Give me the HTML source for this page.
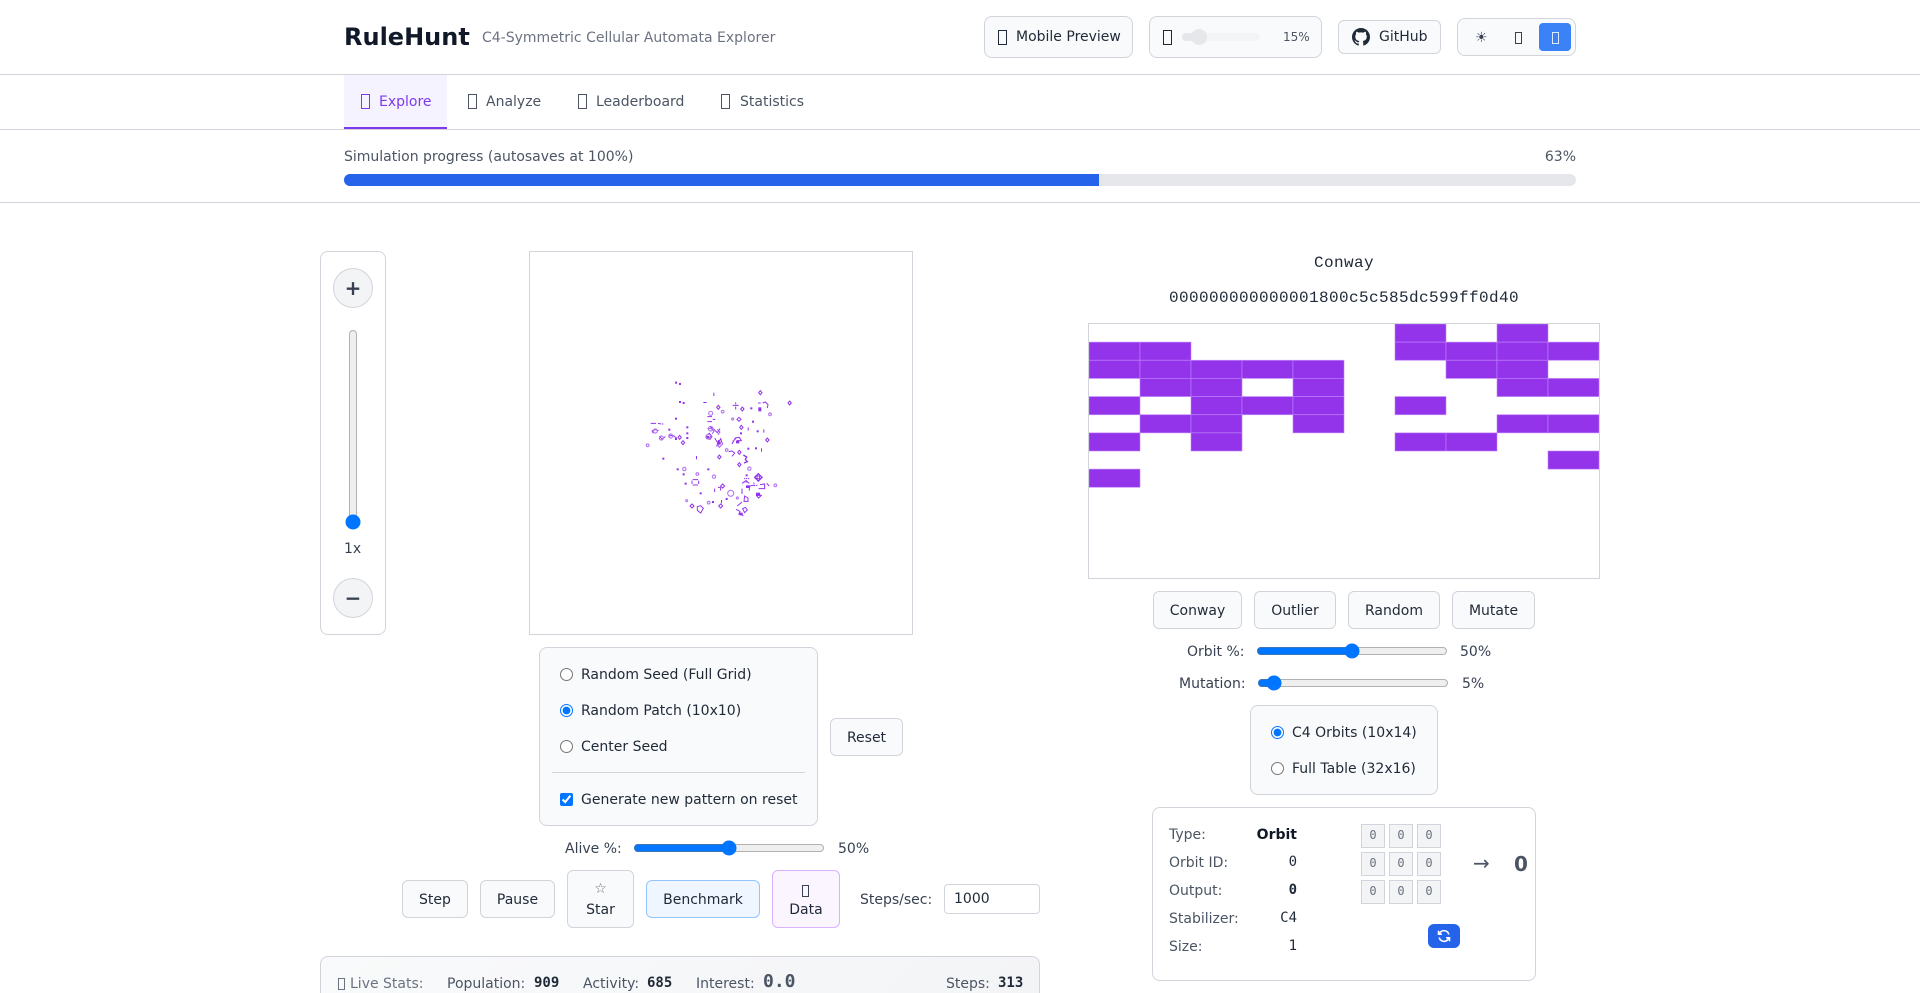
<!DOCTYPE html>
<html lang="en">
<head>
<meta charset="utf-8">
<title>RuleHunt</title>
<style>
html,body{margin:0;padding:0;width:1920px;height:993px;overflow:hidden;background:#fff;}
body{position:relative;font-family:"DejaVu Sans","Liberation Sans",sans-serif;font-size:14px;color:#1f2937;}
.a{position:absolute;box-sizing:border-box;}
.t{position:absolute;white-space:nowrap;line-height:20px;height:20px;margin-top:1px;}
.m{font-family:"DejaVu Sans Mono","Liberation Mono",monospace;}
.line{position:absolute;left:0;width:1920px;height:1px;background:#d1d5db;}
.b{position:absolute;box-sizing:border-box;background:#f9fafb;border:1px solid #d1d5db;border-radius:6px;display:flex;align-items:center;justify-content:center;color:#1f2937;white-space:nowrap;padding-top:2px;}
.tab{color:#4b5563;}
.x{position:absolute;box-sizing:border-box;width:9px;height:15px;border:1px solid #374151;}
.s{width:7px;height:12px;}
input{margin:0;position:absolute;}
input[type=range]{height:16px;accent-color:#0075ff;}
.c{position:absolute;box-sizing:border-box;width:24px;height:24px;background:#f3f4f6;border:1px solid #d1d5db;color:#6b7280;font:12px/20px "DejaVu Sans Mono",monospace;text-align:center;}
.g{color:#4b5563;}
</style>
</head>
<body>
<!-- Header -->
<div class="t" style="margin-top:0;left:344px;top:21px;font-size:24px;font-weight:700;line-height:32px;height:32px;color:#111827;">RuleHunt</div>
<div class="t" style="left:482px;top:27px;color:#6b7280;">C4-Symmetric Cellular Automata Explorer</div>

<div class="b" style="left:984px;top:16px;width:149px;height:42px;border-radius:8px;"></div>
<div class="x" style="left:998px;top:30px;border-color:#1f2937;"></div>
<div class="t" style="left:1016px;top:26px;">Mobile Preview</div>
<div class="b" style="left:1149px;top:16px;width:173px;height:42px;border-radius:8px;"></div>
<div class="x" style="left:1163px;top:30px;border-color:#1f2937;"></div>
<div class="a" style="left:1182px;top:33px;width:78px;height:8px;background:#f3f4f6;border-radius:4px;"></div>
<div class="a" style="left:1182px;top:33px;width:17px;height:8px;background:#e5e7eb;border-radius:4px 0 0 4px;"></div>
<div class="a" style="left:1191px;top:29px;width:16px;height:16px;background:#e5e7eb;border-radius:50%;"></div>
<div class="t g" style="margin-top:0;left:1283px;top:27px;font-size:12px;">15%</div>

<div class="b" style="left:1338px;top:20px;width:103px;height:34px;"></div>
<svg class="a" style="left:1352px;top:28px;" width="18" height="18" viewBox="0 0 16 16" fill="#1f2937"><path d="M8 0C3.58 0 0 3.58 0 8c0 3.54 2.29 6.53 5.47 7.59.4.07.55-.17.55-.38 0-.19-.01-.82-.01-1.49-2.01.37-2.53-.49-2.69-.94-.09-.23-.48-.94-.82-1.13-.28-.15-.68-.52-.01-.53.63-.01 1.08.58 1.23.82.72 1.21 1.87.87 2.33.66.07-.52.28-.87.51-1.07-1.78-.2-3.64-.89-3.64-3.95 0-.87.31-1.59.82-2.15-.08-.2-.36-1.02.08-2.12 0 0 .67-.21 2.2.82.64-.18 1.32-.27 2-.27s1.36.09 2 .27c1.53-1.04 2.2-.82 2.2-.82.44 1.1.16 1.92.08 2.12.51.56.82 1.27.82 2.15 0 3.07-1.87 3.75-3.65 3.95.29.25.54.73.54 1.48 0 1.07-.01 1.93-.01 2.2 0 .21.15.46.55.38A8.01 8.01 0 0 0 16 8c0-4.42-3.58-8-8-8z"/></svg>
<div class="t" style="left:1379px;top:26px;">GitHub</div>

<div class="b" style="left:1457px;top:18px;width:119px;height:38px;border-radius:8px;"></div>
<div class="a" style="left:1539px;top:23px;width:32px;height:28px;background:#3b82f6;border-radius:4px;"></div>
<div class="t" style="left:1475px;top:27px;color:#374151;">☀</div>
<div class="x s" style="left:1515px;top:32px;"></div>
<div class="x s" style="left:1552px;top:32px;border-color:#dbeafe;"></div>

<div class="line" style="top:74px;"></div>

<!-- Tabs -->
<div class="a" style="left:344px;top:75px;width:103px;height:54px;background:#f5f3ff;border-bottom:2px solid #7c3aed;"></div>
<div class="x" style="left:361px;top:94px;border-color:#7c3aed;"></div>
<div class="t" style="left:379px;top:91px;color:#7c3aed;">Explore</div>
<div class="x" style="left:468px;top:94px;border-color:#4b5563;"></div>
<div class="t tab" style="left:486px;top:91px;">Analyze</div>
<div class="x" style="left:578px;top:94px;border-color:#4b5563;"></div>
<div class="t tab" style="left:596px;top:91px;">Leaderboard</div>
<div class="x" style="left:721px;top:94px;border-color:#4b5563;"></div>
<div class="t tab" style="left:740px;top:91px;">Statistics</div>
<div class="line" style="top:129px;"></div>

<!-- Progress -->
<div class="t" style="left:344px;top:146px;color:#4b5563;">Simulation progress (autosaves at 100%)</div>
<div class="t" style="right:344px;top:146px;color:#4b5563;">63%</div>
<div class="a" style="left:344px;top:174px;width:1232px;height:12px;background:#e5e7eb;border-radius:6px;overflow:hidden;"><div style="width:755px;height:12px;background:#2563eb;"></div></div>
<div class="line" style="top:202px;"></div>

<!-- Zoom panel -->
<div class="a" style="left:320px;top:251px;width:66px;height:384px;background:#fff;border:1px solid #d1d5db;border-radius:8px;"></div>
<div class="b" style="left:333px;top:268px;width:40px;height:40px;border-radius:50%;background:#f3f4f6;font-size:20px;font-weight:700;color:#374151;padding-top:0;">+</div>
<input type="range" min="1" max="100" value="1" style="left:345px;top:329px;width:16px;height:201px;writing-mode:vertical-lr;direction:rtl;">
<div class="t" style="left:344px;top:538px;color:#374151;">1x</div>
<div class="b" style="left:333px;top:578px;width:40px;height:40px;border-radius:50%;background:#f3f4f6;font-size:20px;font-weight:700;color:#374151;padding-top:0;">−</div>

<!-- Sim canvas -->
<div class="a" style="left:529px;top:251px;width:384px;height:384px;background:#fff;border:1px solid #d1d5db;"></div>
<svg class="a" style="left:630px;top:370px;" width="170" height="160" viewBox="0 0 510 480">
<g fill="#9333ea">
<rect x="135" y="35" width="6" height="6"/><rect x="147" y="39" width="6" height="6"/><rect x="147" y="93" width="6" height="6"/><rect x="158" y="96" width="6" height="6"/><rect x="135" y="143" width="6" height="6"/><rect x="115" y="176" width="6" height="6"/><rect x="169" y="169" width="6" height="6"/><rect x="169" y="187" width="6" height="6"/><rect x="169" y="201" width="6" height="6"/><rect x="135" y="204" width="6" height="6"/><rect x="140" y="295" width="6" height="6"/><rect x="158" y="310" width="6" height="6"/><rect x="164" y="338" width="6" height="6"/><rect x="209" y="367" width="6" height="6"/><rect x="232" y="295" width="6" height="6"/><rect x="97" y="263" width="6" height="6"/><rect x="246" y="393" width="6" height="6"/><rect x="287" y="384" width="6" height="6"/><rect x="352" y="233" width="6" height="6"/><rect x="375" y="232" width="6" height="6"/><rect x="380" y="181" width="6" height="6"/><rect x="366" y="152" width="6" height="6"/><rect x="361" y="112" width="6" height="6"/><rect x="330" y="187" width="6" height="6"/><rect x="347" y="313" width="6" height="6"/>
<rect x="220" y="96" width="10" height="3"/><rect x="250" y="68" width="3" height="10"/><rect x="400" y="178" width="3" height="10"/><rect x="353" y="172" width="3" height="10"/><rect x="198" y="258" width="3" height="10"/><rect x="393" y="235" width="3" height="10"/><rect x="273" y="390" width="3" height="10"/>
<rect x="385" y="112" width="9" height="12"/><rect x="262" y="214" width="10" height="10"/><rect x="318" y="212" width="10" height="8"/><rect x="348" y="346" width="12" height="8"/><rect x="378" y="368" width="12" height="10"/><rect x="328" y="428" width="10" height="8"/><rect x="228" y="198" width="10" height="8"/>
</g>
<g fill="none" stroke="#9333ea" stroke-width="3">
<path d="M265 106l5 6-5 6-5-6z"/>
<path d="M337 111l5 6-5 6-5-6zM327 142l6 6-6 6-6-6zM334 166l5 6-5 6-5-6zM391 62l5 6-5 6-5-6zM479 93l5 6-5 6-5-6zM412 204l5 6-5 6-5-6zM159 212l5 6-5 6-5-6zM149 196l5 6-5 6-5-6zM268 255l5 6-5 6-5-6zM328 278l5 6-5 6-5-6zM186 402l6 6-6 6-6-6zM272 402l6 6-6 6-6-6zM328 241l5 6-5 6-5-6zM278 342l6 6-6 6-6-6z"/>
<path d="M308 106h18M317 97v6M317 110v8M232 140h14M232 155h14M248 148h8M188 329h16M188 345h16M186 332v10M206 332v10M254 356v10M264 352h8M272 352v10"/>
<path d="M384 99h8M398 99l8-3 8 8-2 10"/>
<path d="M62 160h16M84 160l10 2M100 162h-4M66 182l10-3 10 3M66 182l4 8M116 198l12-2 12 8M88 198l8 10 10-8"/>
<path d="M202 410l10-3 8 8-8 14-10-8z"/>
<path d="M340 255l10 6-4 8 6 6-10 4" stroke-width="4"/>
<path d="M296 245l10-2 8 6-8 10M228 198l10-8 8 10-6 8-10-2zM240 170l12 8 10 10 8-12M254 204l10 16 8-14 6 18M266 210l-6 20M306 222l10-18 12-2 6 10h-14M336 340l12-8 10 8M352 352l14-6M336 356v16M358 350v12M390 344l14-2v14h-18M410 340l8 8M380 372l14 4-8 8-6-6"/>
<path d="M344 378l10 6v10h-12zM322 408l14-12M318 418l12 6-4 10M334 432l6 6M338 416l8-4 6 8-8 8z"/>
<path d="M385 311l11 11-11 11-11-11z" stroke-width="4"/><rect x="381" y="318" width="8" height="8"/>
<path d="M232 176h12l8 8-6 8M262 178l8 8-6 8M226 202l10 4 8-6M308 214l10-8M262 222l6 10 8-8" stroke="#a855f7"/>
<path d="M342 326h16M342 336h12M366 346h16M372 338v12" stroke-dasharray="4 2"/>
</g>
<g fill="none" stroke="#b57bf0" stroke-width="3.4">
<circle cx="242" cy="130" r="6"/><circle cx="278" cy="125" r="4"/><circle cx="290" cy="240" r="4"/><circle cx="252" cy="320" r="5"/><circle cx="236" cy="398" r="4"/><circle cx="163" cy="297" r="5"/><circle cx="358" cy="296" r="5"/><circle cx="302" cy="370" r="9"/><circle cx="170" cy="392" r="3"/><circle cx="420" cy="133" r="4"/><circle cx="53" cy="226" r="4"/><circle cx="308" cy="147" r="3"/><circle cx="122" cy="198" r="6"/><circle cx="436" cy="346" r="4"/><circle cx="322" cy="384" r="3"/><circle cx="202" cy="312" r="4"/><circle cx="242" cy="176" r="7"/><circle cx="235" cy="200" r="7"/><circle cx="76" cy="183" r="6"/><circle cx="94" cy="204" r="6"/><circle cx="105" cy="72" r="0"/>
</g>
</svg>

<!-- Seed panel -->
<div class="a" style="left:539px;top:647px;width:279px;height:179px;background:#f9fafb;border:1px solid #d1d5db;border-radius:8px;"></div>
<input type="radio" name="s" style="left:560px;top:668px;width:13px;height:13px;">
<div class="t" style="left:581px;top:664px;">Random Seed (Full Grid)</div>
<input type="radio" name="s" checked style="left:560px;top:704px;width:13px;height:13px;">
<div class="t" style="left:581px;top:700px;">Random Patch (10x10)</div>
<input type="radio" name="s" style="left:560px;top:740px;width:13px;height:13px;">
<div class="t" style="left:581px;top:736px;">Center Seed</div>
<div class="a" style="left:552px;top:772px;width:253px;height:1px;background:#d1d5db;"></div>
<input type="checkbox" checked style="left:560px;top:793px;width:13px;height:13px;">
<div class="t" style="left:581px;top:789px;">Generate new pattern on reset</div>
<div class="b" style="left:830px;top:718px;width:73px;height:38px;">Reset</div>

<!-- Alive -->
<div class="t" style="left:565px;top:838px;color:#374151;">Alive %:</div>
<input type="range" value="50" style="left:633px;top:840px;width:192px;">
<div class="t" style="left:838px;top:838px;color:#374151;">50%</div>

<!-- Controls -->
<div class="b" style="left:402px;top:880px;width:66px;height:38px;">Step</div>
<div class="b" style="left:480px;top:880px;width:75px;height:38px;">Pause</div>
<div class="b" style="left:567px;top:870px;width:67px;height:58px;"></div>
<div class="t" style="margin-top:0;left:567px;width:67px;text-align:center;top:879px;font-size:14px;color:#6b7280;">☆</div>
<div class="t" style="left:567px;width:67px;text-align:center;top:899px;">Star</div>
<div class="b" style="left:646px;top:880px;width:114px;height:38px;background:#eff6ff;border-color:#93c5fd;">Benchmark</div>
<div class="b" style="left:772px;top:870px;width:68px;height:58px;background:#faf5ff;border-color:#d8b4fe;"></div>
<div class="x s" style="left:802px;top:885px;"></div>
<div class="t" style="left:772px;width:68px;text-align:center;top:899px;">Data</div>
<div class="t" style="left:860px;top:889px;color:#374151;">Steps/sec:</div>
<div class="a" style="left:944px;top:884px;width:96px;height:30px;background:#fff;border:1px solid #d1d5db;border-radius:4px;padding-left:9px;line-height:28px;">1000</div>

<!-- Stats -->
<div class="a" style="left:320px;top:956px;width:720px;height:60px;background:linear-gradient(135deg,#f9fafb,#f3f4f6);border:1px solid #d1d5db;border-radius:8px;"></div>
<div class="x s" style="left:338px;top:978px;border-color:#6b7280;"></div>
<div class="t" style="left:350px;top:973px;color:#6b7280;">Live Stats:</div>
<div class="t" style="left:447px;top:973px;color:#4b5563;">Population:</div>
<div class="t m" style="left:534px;top:972px;font-size:14px;font-weight:700;">909</div>
<div class="t" style="left:583px;top:973px;color:#4b5563;">Activity:</div>
<div class="t m" style="left:647px;top:972px;font-size:14px;font-weight:700;">685</div>
<div class="t" style="left:696px;top:973px;color:#4b5563;">Interest:</div>
<div class="t m" style="left:763px;top:971px;font-size:18px;font-weight:700;color:#4b5563;">0.0</div>
<div class="t" style="left:946px;top:973px;color:#4b5563;">Steps:</div>
<div class="t m" style="left:998px;top:972px;font-size:14px;font-weight:700;">313</div>

<!-- Rule panel -->
<div class="t" style="left:1088px;width:512px;text-align:center;top:252px;font-family:'Liberation Mono',monospace;font-size:16px;letter-spacing:.4px;color:#1f2937;">Conway</div>
<div class="t" style="margin-top:0;left:1088px;width:512px;text-align:center;top:288px;font-family:'Liberation Mono',monospace;font-size:16px;letter-spacing:.4px;color:#1f2937;">000000000000001800c5c585dc599ff0d40</div>
<div class="a" style="left:1088px;top:323px;width:512px;height:256px;border:1px solid #d1d5db;background:#fff;"></div>
<svg class="a" style="left:1089px;top:324px;" width="510" height="254" viewBox="0 0 510 254">
<g fill="#9333ea" stroke="#c084fc" stroke-opacity=".75" stroke-width=".8">
<rect x="306" y="0" width="51" height="18.14"/><rect x="408" y="0" width="51" height="18.14"/>
<rect x="0" y="18.14" width="51" height="18.14"/><rect x="51" y="18.14" width="51" height="18.14"/><rect x="306" y="18.14" width="51" height="18.14"/><rect x="357" y="18.14" width="51" height="18.14"/><rect x="408" y="18.14" width="51" height="18.14"/><rect x="459" y="18.14" width="51" height="18.14"/>
<rect x="0" y="36.29" width="51" height="18.14"/><rect x="51" y="36.29" width="51" height="18.14"/><rect x="102" y="36.29" width="51" height="18.14"/><rect x="153" y="36.29" width="51" height="18.14"/><rect x="204" y="36.29" width="51" height="18.14"/><rect x="357" y="36.29" width="51" height="18.14"/><rect x="408" y="36.29" width="51" height="18.14"/>
<rect x="51" y="54.43" width="51" height="18.14"/><rect x="102" y="54.43" width="51" height="18.14"/><rect x="204" y="54.43" width="51" height="18.14"/><rect x="408" y="54.43" width="51" height="18.14"/><rect x="459" y="54.43" width="51" height="18.14"/>
<rect x="0" y="72.57" width="51" height="18.14"/><rect x="102" y="72.57" width="51" height="18.14"/><rect x="153" y="72.57" width="51" height="18.14"/><rect x="204" y="72.57" width="51" height="18.14"/><rect x="306" y="72.57" width="51" height="18.14"/>
<rect x="51" y="90.71" width="51" height="18.14"/><rect x="102" y="90.71" width="51" height="18.14"/><rect x="204" y="90.71" width="51" height="18.14"/><rect x="408" y="90.71" width="51" height="18.14"/><rect x="459" y="90.71" width="51" height="18.14"/>
<rect x="0" y="108.86" width="51" height="18.14"/><rect x="102" y="108.86" width="51" height="18.14"/><rect x="306" y="108.86" width="51" height="18.14"/><rect x="357" y="108.86" width="51" height="18.14"/>
<rect x="459" y="127" width="51" height="18.14"/>
<rect x="0" y="145.14" width="51" height="18.14"/>
</g>
</svg>

<div class="b" style="left:1153px;top:591px;width:89px;height:38px;">Conway</div>
<div class="b" style="left:1254px;top:591px;width:82px;height:38px;">Outlier</div>
<div class="b" style="left:1348px;top:591px;width:92px;height:38px;">Random</div>
<div class="b" style="left:1452px;top:591px;width:83px;height:38px;">Mutate</div>

<div class="t" style="left:1187px;top:641px;color:#374151;">Orbit %:</div>
<input type="range" value="50" style="left:1256px;top:643px;width:192px;">
<div class="t" style="left:1460px;top:641px;color:#374151;">50%</div>
<div class="t" style="left:1179px;top:673px;color:#374151;">Mutation:</div>
<input type="range" value="5" style="left:1257px;top:675px;width:192px;">
<div class="t" style="left:1462px;top:673px;color:#374151;">5%</div>

<div class="a" style="left:1250px;top:705px;width:188px;height:90px;background:#f9fafb;border:1px solid #d1d5db;border-radius:8px;"></div>
<input type="radio" name="r" checked style="left:1271px;top:726px;width:13px;height:13px;">
<div class="t" style="left:1292px;top:722px;">C4 Orbits (10x14)</div>
<input type="radio" name="r" style="left:1271px;top:762px;width:13px;height:13px;">
<div class="t" style="left:1292px;top:758px;">Full Table (32x16)</div>

<!-- Info panel -->
<div class="a" style="left:1152px;top:807px;width:384px;height:174px;background:#fff;border:1px solid #d1d5db;border-radius:8px;"></div>
<div class="t g" style="left:1169px;top:824px;">Type:</div>
<div class="t" style="right:623px;top:824px;font-weight:700;color:#111827;">Orbit</div>
<div class="t g" style="left:1169px;top:852px;">Orbit ID:</div>
<div class="t m" style="right:623px;top:851px;">0</div>
<div class="t g" style="left:1169px;top:880px;">Output:</div>
<div class="t m" style="right:623px;top:879px;font-weight:700;">0</div>
<div class="t g" style="left:1169px;top:908px;">Stabilizer:</div>
<div class="t m" style="right:623px;top:907px;">C4</div>
<div class="t g" style="left:1169px;top:936px;">Size:</div>
<div class="t m" style="right:623px;top:935px;">1</div>

<div class="c" style="left:1361px;top:824px;">0</div><div class="c" style="left:1389px;top:824px;">0</div><div class="c" style="left:1417px;top:824px;">0</div>
<div class="c" style="left:1361px;top:852px;">0</div><div class="c" style="left:1389px;top:852px;">0</div><div class="c" style="left:1417px;top:852px;">0</div>
<div class="c" style="left:1361px;top:880px;">0</div><div class="c" style="left:1389px;top:880px;">0</div><div class="c" style="left:1417px;top:880px;">0</div>
<div class="t" style="margin-top:0;left:1473px;top:851px;font-size:20px;line-height:24px;height:24px;color:#4b5563;">→</div>
<div class="t" style="margin-top:0;left:1514px;top:852px;font-size:20px;line-height:24px;height:24px;font-weight:700;color:#4b5563;">0</div>
<div class="a" style="left:1428px;top:924px;width:32px;height:24px;background:#2563eb;border-radius:6px;display:flex;align-items:center;justify-content:center;">
<svg width="14" height="14" viewBox="0 0 14 14" fill="none" stroke="#fff" stroke-width="1.6"><path d="M11.8 5.4A5 5 0 0 0 3 3.6L1.8 5M2.2 8.6A5 5 0 0 0 11 10.4L12.2 9"/><path d="M1.5 1.8V5.2H4.9M12.5 12.2V8.8H9.1"/></svg>
</div>
</body>
</html>
